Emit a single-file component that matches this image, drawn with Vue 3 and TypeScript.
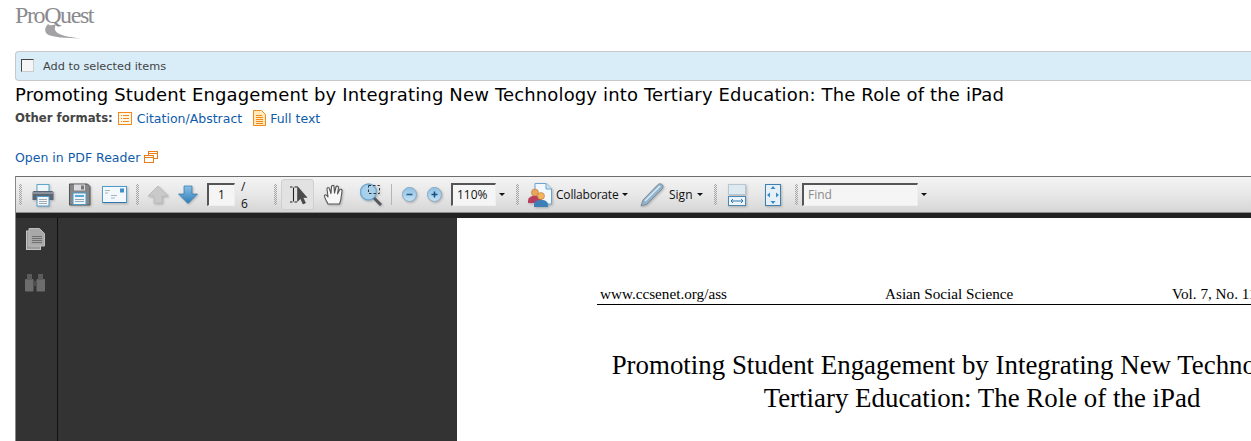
<script setup lang="ts">
const title = 'Promoting Student Engagement by Integrating New Technology into Tertiary Education: The Role of the iPad'
</script>

<template>
  <div class="page">
    <header class="logo">
      <span class="logo-text">ProQuest</span>
      <svg class="swoosh" width="80" height="40" viewBox="0 0 80 40">
        <path d="M33 24C30 27 29 31 32 34C36 37.500 52 38 66 38.500C54 37 44 35.500 41 31.500C39 29 40 26 42 23C39 25.500 35 26 33 24Z" fill="#a3a3a5" />
      </svg>
    </header>

    <div class="select-bar">
      <span class="check"></span>
      <span class="select-label">Add to selected items</span>
    </div>

    <h1 class="title">{{ title }}</h1>

    <div class="formats">
      <strong>Other formats:</strong>
      <svg class="fmt-icon" width="14" height="13" viewBox="0 0 14 13">
        <rect x=".5" y=".5" width="13" height="12" fill="#fff7ea" stroke="#f18a1e" />
        <path d="M3 3.500h1M5 3.500h6M3 6.500h1M5 6.500h6M3 9.500h1M5 9.500h6" stroke="#f18a1e" />
      </svg>
      <a class="link">Citation/Abstract</a>
      <svg class="fmt-icon second" width="13" height="16" viewBox="0 0 13 16">
        <path d="M.5.500h8l4 4v11H.500Z" fill="#ffe9bd" stroke="#f18a1e" />
        <path d="M3 5.500h6M3 7.500h7M3 9.500h7M3 11.500h7M3 13.500h7" stroke="#f18a1e" />
      </svg>
      <a class="link">Full text</a>
    </div>

    <div class="reader-link">
      <a class="link">Open in PDF Reader</a>
      <svg width="14" height="12" viewBox="0 0 14 12">
        <rect x="4.500" y=".5" width="9" height="7" fill="#fff" stroke="#e8801a" />
        <path d="M4.500 2.500h9" stroke="#e8801a" />
        <rect x=".5" y="4.500" width="9" height="7" fill="#fff" stroke="#e8801a" />
        <path d="M.5 6.500h9" stroke="#e8801a" />
      </svg>
    </div>

    <section class="viewer">
      <div class="toolbar">
        <span class="grip g1"></span>
        <svg class="ic m-print" width="22" height="24" viewBox="0 0 22 24">
          <rect x="5" y="1.500" width="12" height="7" fill="#eef6fb" stroke="#5fa5cc" />
          <path d="M2 8h18a1.500 1.500 0 0 1 1.500 1.500V17H.5V9.500A1.500 1.500 0 0 1 2 8Z" fill="#5c6672" />
          <rect x="1" y="9" width="20" height="2" fill="#8a939c" />
          <rect x="5" y="13.500" width="12" height="9.500" fill="#f5f8fb" stroke="#4f9ccb" />
          <path d="M7 16.500h8M7 18.500h8M7 20.500h8" stroke="#a0aab3" />
        </svg>
        <svg class="ic m-save" width="23" height="23" viewBox="0 0 23 23">
          <path d="M1.500 1h18l2.500 2.500V22H1.500Z" fill="#868688" stroke="#545456" />
          <rect x="6" y="1.500" width="11" height="6" fill="#dcdcde" />
          <rect x="13" y="2.500" width="3" height="4" fill="#777" />
          <rect x="5" y="10" width="13" height="11.500" fill="#eef6fb" stroke="#4f9ccb" />
          <rect x="7" y="12" width="9" height="2" fill="#5aa6d6" />
          <path d="M7 16.500h9M7 18.500h9" stroke="#8fa4b5" />
        </svg>
        <svg class="ic m-mail" width="25" height="18" viewBox="0 0 25 18">
          <rect x=".5" y=".5" width="24" height="16" fill="#f2f8fc" stroke="#4f9ccb" />
          <rect x="18" y="2.500" width="4" height="4" fill="#3f8fca" />
          <path d="M3 4.500h5M3 7h3M9 9.500h6M9 12h4" stroke="#a8b4bc" />
          <path d="M1 16.500h23" stroke="#2f77ad" />
        </svg>
        <span class="grip g2"></span>
        <svg class="ic m-up" width="20" height="19" viewBox="0 0 20 19">
          <path d="M10 1 20 11H14V18H6V11H0Z" fill="#c9c9c9" stroke="#bcbcbc" />
        </svg>
        <svg class="ic m-down" width="20" height="19" viewBox="0 0 20 19">
          <defs>
            <linearGradient id="blue" x1="0" y1="0" x2="0" y2="1">
              <stop offset="0" stop-color="#8cc0e4" />
              <stop offset="1" stop-color="#2c7db8" />
            </linearGradient>
            <linearGradient id="orb" x1="0" y1="0" x2="0" y2="1">
              <stop offset="0" stop-color="#8fc0e4" />
              <stop offset="1" stop-color="#c6e2f5" />
            </linearGradient>
          </defs>
          <path d="M10 18.500 .5 9H6V1H14V9H19.500Z" fill="url(#blue)" stroke="#2f77ad" stroke-width=".7" />
        </svg>
        <span class="field page-field">1</span>
        <span class="of">/ 6</span>
        <span class="grip g3"></span>
        <span class="tool-on">
          <svg width="24" height="20" viewBox="0 0 24 20">
            <path d="M4 2h2.500M8.500 2H11M4 17h2.500M8.500 17H11M7.500 2.500v14" stroke="#222" stroke-width="1.100" fill="none" />
            <path d="M11.500 1.500V16.500L14.500 13.500 17 19 19.500 18 17 12.500H21Z" fill="#4a4a4a" stroke="#333" stroke-width=".5" />
          </svg>
        </span>
        <svg class="ic m-hand" width="22" height="22" viewBox="0 0 22 22">
          <path d="M5 20C3 16 1 13 1.500 11.500C2.500 10 4 11.500 5 13L4 5C4 3 6 3 6.500 5L8 9.500 8.500 2.500C9 1 11 1 11 2.500L11.500 9 13 3C13.500 1.500 15.500 2 15.500 3.500L14.500 10 16.500 6C17.500 4.500 19.500 5.500 19 7C18.500 10 18.500 15 16.500 20Z" fill="#f8f8f8" stroke="#555" stroke-width="1.100" stroke-linejoin="round" />
        </svg>
        <svg class="ic m-mq" width="22" height="23" viewBox="0 0 22 23">
          <circle cx="8.500" cy="9" r="8" fill="#a9d0ea" stroke="#6fa9d0" stroke-width="1.400" />
          <path d="M14 15 21 22" stroke="#55595d" stroke-width="3" />
          <rect x="8.500" y="2.500" width="11" height="8" fill="none" stroke="#333" stroke-dasharray="2.500 2" />
        </svg>
        <span class="sep"></span>
        <svg class="ic m-zout" width="15" height="15" viewBox="0 0 15 15">
          <circle cx="7.500" cy="7.500" r="7" fill="url(#orb)" stroke="#8aa8bf" />
          <path d="M4.500 7.500h6" stroke="#24618f" stroke-width="1.600" />
        </svg>
        <svg class="ic m-zin" width="15" height="15" viewBox="0 0 15 15">
          <circle cx="7.500" cy="7.500" r="7" fill="url(#orb)" stroke="#8aa8bf" />
          <path d="M4.500 7.500h6M7.500 4.500v6" stroke="#17507d" stroke-width="1.600" />
        </svg>
        <span class="field zoom-field">110%</span>
        <span class="caret c-zoom"></span>
        <span class="grip g4"></span>
        <svg class="ic m-collab" width="24" height="24" viewBox="0 0 24 24">
          <path d="M7 .5h11l5.500 5.500v15H7Z" fill="#f2f7fb" stroke="#6aa6d0" />
          <path d="M18 .5V6h5.500" fill="#cfe2f0" stroke="#6aa6d0" />
          <circle cx="7" cy="9.500" r="3.500" fill="#e8a35c" stroke="#b26c2a" stroke-width=".5" />
          <path d="M0 18c0-3 2-5 7-5s7 2 7 5v2H0Z" fill="#b83e5e" />
          <circle cx="13" cy="13" r="3.500" fill="#f0b35f" stroke="#b26c2a" stroke-width=".5" />
          <path d="M6 22c0-3 2-5 7-5s7 2 7 5v2H6Z" fill="#3f7fb8" />
        </svg>
        <span class="tool-text collab-text">Collaborate</span>
        <span class="caret c-collab"></span>
        <svg class="ic m-pen" width="24" height="24" viewBox="0 0 24 24">
          <path d="M1 23 3 17 18 1.500C20 0 23 1 23 3.500C23 4.500 22.500 5.500 22 6L7 21Z" fill="#8fb4d0" stroke="#7d8b96" />
          <path d="M5 18 20 3" stroke="#dfeaf2" stroke-width="1.500" />
        </svg>
        <span class="tool-text sign-text">Sign</span>
        <span class="caret c-sign"></span>
        <span class="grip g5"></span>
        <svg class="ic m-fw" width="18" height="22" viewBox="0 0 18 22">
          <rect x=".5" y=".5" width="17" height="10" fill="#dfe9f0" stroke="#b6c6d2" />
          <rect x=".5" y="12.500" width="17" height="9" fill="#eef5fa" stroke="#4b87b5" />
          <path d="M3 17h12M3 17l2-2M3 17l2 2M15 17l-2-2M15 17l-2 2" stroke="#2f77ad" fill="none" />
        </svg>
        <svg class="ic m-fp" width="16" height="22" viewBox="0 0 16 22">
          <rect x=".5" y=".5" width="15" height="21" fill="#e6f0f8" stroke="#3f7fb0" />
          <path d="M8 2 5.500 5h5ZM8 20l-2.500-3h5ZM2 11l3-2.500v5ZM14 11l-3-2.500v5Z" fill="#3a8ac5" />
        </svg>
        <span class="grip g6"></span>
        <span class="field find-field">Find</span>
        <span class="caret c-find"></span>
      </div>

      <div class="body">
        <aside class="rail">
          <svg class="rail-pages" width="19" height="22" viewBox="0 0 19 22">
            <rect x=".5" y="3" width="14" height="18.500" fill="#9b9b9b" stroke="#c4c4c4" />
            <path d="M3 .5h10.500l5 5V18H3Z" fill="#a8a8a8" stroke="#bdbdbd" />
            <path d="M6 8.500h10M6 10.500h10M6 12.500h10M6 14.500h10" stroke="#6f6f6f" />
          </svg>
          <svg class="rail-find" width="22" height="19" viewBox="0 0 22 19">
            <rect x="1" y="6" width="8.500" height="12.500" rx="1" fill="#6d6d6d" />
            <rect x="12.500" y="6" width="8.500" height="12.500" rx="1" fill="#6d6d6d" />
            <rect x="3" y="1" width="5" height="6" fill="#5c5c5c" />
            <rect x="14" y="1" width="5" height="6" fill="#5c5c5c" />
            <rect x="9" y="8" width="4" height="5" fill="#4f4f4f" />
          </svg>
        </aside>
        <div class="pane"></div>
        <article class="sheet">
          <div class="sheet-inner">
            <div class="running">
              <span class="r1">www.ccsenet.org/ass</span>
              <span class="r2">Asian Social Science</span>
              <span class="r3">Vol. 7, No. 11; November 2011</span>
            </div>
            <h2 class="paper-title">Promoting Student Engagement by Integrating New Technology into<br />Tertiary Education: The Role of the iPad</h2>
          </div>
        </article>
      </div>
    </section>
  </div>
</template>

<style>
html, body { margin: 0; background: #fff; overflow: hidden; }
</style>

<style scoped>
.page {
  width: 1251px;
  height: 441px;
  overflow: hidden;
  box-sizing: border-box;
  padding-left: 15px;
  font-family: "DejaVu Sans", Verdana, sans-serif;
  background: #fff;
}
.logo { height: 51px; position: relative; box-sizing: border-box; padding-top: 2px; }
.logo-text {
  font-family: "Liberation Serif", serif;
  font-size: 24px;
  line-height: 26px;
  letter-spacing: -1.4px;
  color: #8a8a8d;
  display: block;
}
.swoosh { position: absolute; left: 0; top: 0; }
.select-bar {
  height: 30px;
  box-sizing: border-box;
  border: 1px solid #c8c8c8;
  border-right: 0;
  border-radius: 4px 0 0 4px;
  background: #d8edf8;
  display: flex;
  align-items: center;
  padding-left: 5px;
}
.check {
  width: 11px;
  height: 11px;
  border: 1px solid #444;
  border-right-color: #ccc;
  border-bottom-color: #ccc;
  background: #f6f6f6;
  margin-bottom: 1px;
}
.select-label { margin-left: 9px; font-size: 11.300px; color: #444; }
.title {
  margin: 3px 0 0;
  font-size: 18px;
  letter-spacing: .145px;
  line-height: 22px;
  font-weight: 400;
  color: #000;
  white-space: nowrap;
}
.formats {
  display: flex;
  align-items: center;
  height: 20px;
  margin-top: 2px;
  font-size: 12px;
  color: #444;
}
.formats strong { font-weight: 700; font-size: 11.700px; }
.fmt-icon { margin: 0 5px; }
.fmt-icon.second { margin-left: 11px; margin-right: 4px; }
.link { color: #0f5cab; font-size: 12.500px; }
.reader-link {
  display: flex;
  align-items: center;
  gap: 4px;
  height: 18px;
  margin-top: 20px;
}
.viewer {
  margin-top: 10px;
  border-top: 1px solid #6e6e6e;
  border-left: 1px solid #888;
  height: 266px;
  display: flex;
  flex-direction: column;
}
.toolbar {
  height: 36px;
  flex: none;
  display: flex;
  align-items: center;
  background: linear-gradient(#f4f4f4, #e6e6e6 55%, #d6d6d6);
  border-bottom: 1px solid #8e8e8e;
  box-sizing: border-box;
  font-family: "Open Sans", "DejaVu Sans", sans-serif;
  font-size: 12px;
  color: #111;
}
.ic { flex: none; filter: drop-shadow(1px 1px 1px rgba(0, 0, 0, .22)); }
.grip {
  flex: none;
  width: 3px;
  height: 21px;
  background: repeating-conic-gradient(#a5a5a5 0 25%, transparent 0 50%) 0 0 / 2px 2px;
}
.sep { flex: none; width: 1px; height: 21px; background: #b5b5b5; margin-left: 9px; }
.g1 { margin-left: 3px; }
.m-print { margin-left: 10px; }
.m-save { margin-left: 14px; }
.m-mail { margin-left: 11px; }
.g2 { margin-left: 9px; }
.m-up { margin-left: 9px; }
.m-down { margin-left: 10px; }
.field {
  flex: none;
  box-sizing: border-box;
  height: 23px;
  border: 1px solid #eee;
  border-top: 2px solid #555;
  border-left: 2px solid #555;
  background: #f5f5f5;
  line-height: 19px;
}
.page-field { width: 28px; margin-left: 9px; text-align: center; }
.of { margin-left: 6px; width: 17px; flex: none; word-spacing: 3px; }
.g3 { margin-left: 16px; }
.tool-on {
  flex: none;
  margin-left: 4px;
  width: 33px;
  height: 31px;
  box-sizing: border-box;
  border-radius: 3px;
  background: #e2e2e2;
  border: 1px solid #cfcfcf;
  display: flex;
  align-items: center;
  justify-content: center;
}
.m-hand { margin-left: 9px; }
.m-mq { margin-left: 15px; }
.m-zout { margin-left: 10px; }
.m-zin { margin-left: 10px; }
.zoom-field { width: 45px; margin-left: 9px; padding-left: 4px; }
.caret {
  flex: none;
  width: 0;
  height: 0;
  border-left: 3px solid transparent;
  border-right: 3px solid transparent;
  border-top: 3px solid #111;
}
.c-zoom { margin-left: 3px; }
.g4 { margin-left: 11px; }
.m-collab { margin-left: 9px; }
.tool-text { flex: none; white-space: nowrap; }
.collab-text { margin-left: 4px; width: 61px; letter-spacing: -.2px; }
.c-collab { margin-left: 5px; }
.m-pen { margin-left: 12px; }
.sign-text { margin-left: 5px; width: 23px; }
.c-sign { margin-left: 5px; }
.g5 { margin-left: 11px; }
.m-fw { margin-left: 11px; }
.m-fp { margin-left: 19px; }
.g6 { margin-left: 14px; }
.find-field { width: 116px; margin-left: 4px; padding-left: 4px; color: #8a8a8a; }
.c-find { margin-left: 3px; }
.body {
  flex: 1;
  display: flex;
  min-height: 0;
  border-top: 5px solid #222;
}
.rail {
  flex: none;
  width: 42px;
  box-sizing: border-box;
  background: #333;
  border-right: 1px solid #111;
  display: flex;
  flex-direction: column;
  align-items: center;
  padding: 10px 3px 0 0;
}
.rail-find { margin-top: 23px; }
.pane { flex: none; width: 399px; background: #333; }
.sheet { flex: 1; background: #fff; overflow: hidden; min-width: 0; }
.sheet-inner { width: 900px; padding: 66px 0 0 140px; font-family: "Liberation Serif", serif; color: #000; }
.running {
  display: flex;
  width: 720px;
  border-bottom: 1px solid #000;
  font-size: 15.200px;
  line-height: 19px;
  padding: 0 0 1px 3px;
  white-space: nowrap;
}
.r1 { width: 285px; flex: none; }
.r2 { width: 287px; flex: none; }
.r3 { flex: none; }
.paper-title {
  margin: 44px 0 0 11px;
  font-size: 26.900px;
  line-height: 33px;
  font-weight: 400;
  text-align: center;
  white-space: nowrap;
  width: 748px;
}
</style>
